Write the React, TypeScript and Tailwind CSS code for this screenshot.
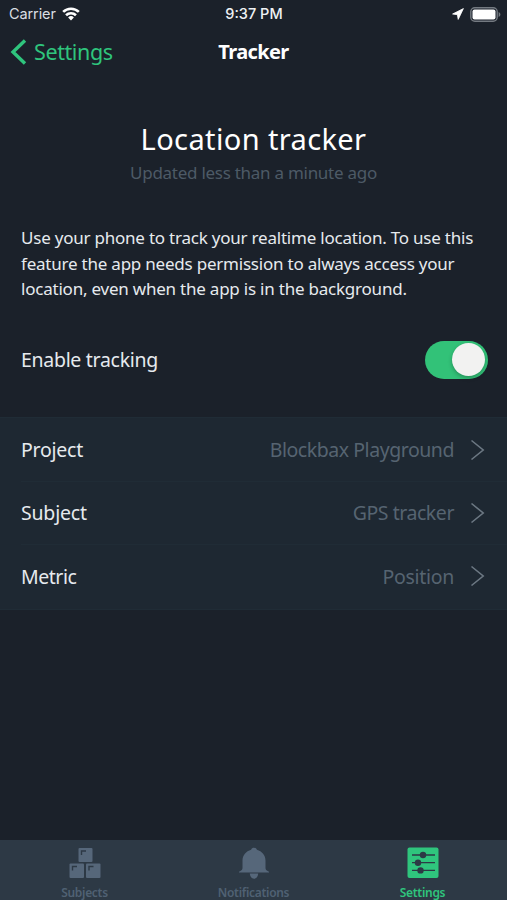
import { useState, type ReactNode } from "react";
import * as Switch from "@radix-ui/react-switch";

const ROWS = [
  { label: "Project", value: "Blockbax Playground", labelTracking: "tracking-[-0.25px]", valueTracking: "tracking-[-0.45px]" },
  { label: "Subject", value: "GPS tracker", labelTracking: "tracking-[-0.2px]", valueTracking: "tracking-[-0.45px]" },
  { label: "Metric", value: "Position", labelTracking: "tracking-[-0.45px]", valueTracking: "tracking-[-0.3px]" },
];

function StatusBar() {
  return (
    <div className="grid h-7 grid-cols-3 items-center pr-1.5 pl-[9px] font-['Inter',sans-serif] text-[14.5px] leading-none text-[#d9dee3]">
      <div className="flex items-center gap-1.5">
        <span className="tracking-[-0.1px]">Carrier</span>
        <svg width="18" height="14" viewBox="0 0 20 15" fill="none" stroke="#fff" strokeWidth="2.9">
          <path d="M1.3 5.2a12.3 12.3 0 0 1 17.4 0" />
          <path d="M4.5 8.9a7.8 7.8 0 0 1 11 0" />
          <path d="M6.8 11.4 10 14.8l3.2-3.4a4.6 4.6 0 0 0-6.4 0Z" fill="#fff" stroke="none" />
        </svg>
      </div>
      <span className="-ml-0.5 text-center font-medium whitespace-nowrap text-[#eef1f4]">9:37 PM</span>
      <div className="flex items-center justify-end gap-1.5">
        <svg width="12" height="12" viewBox="0 0 12 12" fill="#fff" stroke="#fff" strokeWidth="0.8" strokeLinejoin="round">
          <path d="M11.4.6.6 6l4.8.7.8 4.7Z" />
        </svg>
        <svg width="31" height="15" viewBox="0 0 31 15" fill="none">
          <rect x="0.8" y="0.8" width="26.4" height="13.4" rx="4" stroke="#747a81" strokeWidth="1.4" />
          <rect x="2.5" y="2.6" width="23" height="9.8" rx="2" fill="#fff" />
          <path d="M28.6 5v5c1-.4 1.8-1.3 1.8-2.5S29.6 5.4 28.6 5Z" fill="#747a81" />
        </svg>
      </div>
    </div>
  );
}

function NavBar() {
  return (
    <header className="grid h-[50px] grid-cols-3 items-center px-2.5 pb-0.5">
      <button className="flex items-center gap-[7px] text-[#2fc57d]">
        <svg width="17" height="26" viewBox="0 0 17 26" fill="none" stroke="currentColor" strokeWidth="3.4">
          <path d="M15 1.5 3 13l12 11.5" />
        </svg>
        <span className="text-[21.5px] leading-none tracking-[-0.4px]">Settings</span>
      </button>
      <h1 className="text-center text-[20px] leading-none font-bold tracking-[-0.6px] text-white">Tracker</h1>
    </header>
  );
}

function SubjectsIcon() {
  return (
    <svg width="32" height="32" viewBox="0 0 32 32" fill="#56677a">
      <rect x="9.5" y="1" width="14" height="14" rx="1" />
      <rect x="0.5" y="16.5" width="14.5" height="14.5" rx="1" />
      <rect x="17" y="16.5" width="14.5" height="14.5" rx="1" />
      <path d="M12.5 8V4H17M3.5 23.5v-4H8M20 23.5v-4h4.5" fill="none" stroke="#2d3945" strokeWidth="1.4" />
    </svg>
  );
}

function BellIcon() {
  return (
    <svg width="32" height="32" viewBox="0 0 32 32" fill="#56677a">
      <path d="M16 .8c1.5 0 2.3.6 2.9 2C24 4.2 27.5 8.4 27.5 13.500v7.5c0 1.6.7 2.4 3.5 3.8v.7H1v-.7c2.8-1.400 3.5-2.200 3.5-3.800v-7.5C4.500 8.400 8 4.200 13.100 2.800c.6-1.400 1.400-2 2.900-2Z" />
      <path d="M11.8 26.6h8.4c-.2 3.1-1.7 5.1-4.2 5.1s-4-2-4.2-5.1Z" />
    </svg>
  );
}

function SlidersIcon() {
  return (
    <svg width="32" height="32" viewBox="0 0 32 32">
      <rect x="0.5" y="0.5" width="31" height="30.5" rx="2" fill="#2fc57d" />
      <path d="M5 8h23M5 15.7h23M5 23.4h23" stroke="#2d3945" strokeWidth="1.3" />
      <g fill="#2d3945">
        <circle cx="16" cy="8" r="3.2" />
        <circle cx="11" cy="15.7" r="3.2" />
        <circle cx="13.5" cy="23.4" r="3.2" />
      </g>
    </svg>
  );
}

interface TabProps {
  icon: ReactNode;
  label: string;
  active?: boolean;
}

function Tab({ icon, label, active }: TabProps) {
  return (
    <button className={`flex flex-col items-center pt-[7px] ${active ? "text-[#2fc57d]" : "text-[#506173]"}`}>
      {icon}
      <span className="mt-[7px] text-[12px] leading-[14px] font-semibold tracking-[-0.3px]">{label}</span>
    </button>
  );
}

export default function App() {
  const [tracking, setTracking] = useState(true);

  return (
    <div className="flex h-[900px] w-[507px] flex-col overflow-hidden bg-[#1b212a] font-['Noto_Sans',sans-serif] text-[#e6eaee]">
      <StatusBar />
      <NavBar />

      <main className="flex-1">
        <section className="px-[21px] pt-[42px]">
          <h2 className="text-center text-[29px] leading-[38px] tracking-[0.38px] text-white">Location tracker</h2>
          <p className="mt-[3px] text-center text-[17px] leading-6 tracking-[-0.27px] text-[#4d5a66]">
            Updated less than a minute ago
          </p>
          <p className="mt-10 text-[17px] leading-[25.5px] tracking-[-0.22px] whitespace-nowrap">
            <span className="block">Use your phone to track your realtime location. To use this</span>
            <span className="block">feature the app needs permission to always access your</span>
            <span className="block">location, even when the app is in the background.</span>
          </p>
        </section>

        <div className="mt-[39px] flex h-[38px] items-center justify-between pr-[19px] pl-[21px]">
          <span className="text-[19.5px] leading-none tracking-[-0.3px]">Enable tracking</span>
          <Switch.Root
            checked={tracking}
            onCheckedChange={setTracking}
            className="flex h-[38px] w-[63px] items-center rounded-full bg-[#4d5a66] px-[3px] data-[state=checked]:justify-end data-[state=checked]:bg-[#32c278]"
          >
            <Switch.Thumb className="block size-[33px] rounded-full bg-[#f2f2f1] shadow-[0_2px_4px_rgba(0,0,0,0.25)]" />
          </Switch.Root>
        </div>

        <ul className="mt-[38px] h-[193px] border-y border-[#202c36] bg-[#1e2832] pt-px pl-[21px]">
          {ROWS.map((row) => (
            <li
              key={row.label}
              className="flex h-[63.3px] items-center border-b border-[#202c36] pr-[22px] text-[19.5px] leading-none last:h-[62.5px] last:border-0"
            >
              <span className={row.labelTracking}>{row.label}</span>
              <span className={`ml-auto text-[#566471] ${row.valueTracking}`}>{row.value}</span>
              <svg className="ml-4" width="15" height="22" viewBox="0 0 15 22" fill="none" stroke="#6c7883" strokeWidth="1.6">
                <path d="M1.5 1.5 13.2 11 1.5 20.5" />
              </svg>
            </li>
          ))}
        </ul>
      </main>

      <nav className="grid h-[60px] grid-cols-3 bg-[#2d3945]">
        <Tab icon={<SubjectsIcon />} label="Subjects" />
        <Tab icon={<BellIcon />} label="Notifications" />
        <Tab icon={<SlidersIcon />} label="Settings" active />
      </nav>
    </div>
  );
}
